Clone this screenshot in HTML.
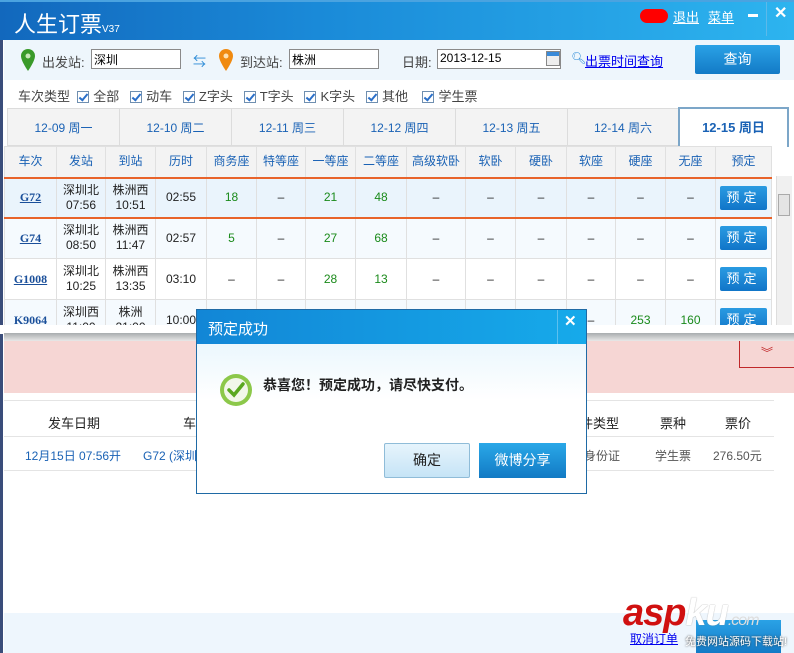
<!DOCTYPE html>
<html><head><meta charset="utf-8"><style>
*{margin:0;padding:0;box-sizing:border-box}
body{width:794px;height:653px;position:relative;overflow:hidden;background:#fff;font-family:"Liberation Sans","Noto Sans CJK SC",sans-serif;font-size:12px;color:#222}
.a{position:absolute}
.title{left:0;top:0;width:794px;height:40px;background:linear-gradient(90deg,#1268bd 0%,#1a8ad8 40%,#2db4ef 100%);border-top:2px solid #4aa3e0}
.inp{background:#fff;border:1px solid #8a8a8a;height:20px;font-size:12px;padding:1px 2px;color:#000}
.cb{display:inline-block;width:12px;height:12px;border:1px solid #6f8fb0;background:#fff;vertical-align:-2px;margin-right:4px;position:relative}
.cb:after{content:"";position:absolute;left:3px;top:0px;width:3px;height:7px;border:solid #2a6fc9;border-width:0 2px 2px 0;transform:rotate(40deg)}
.tab{top:108px;height:38px;border:1px solid #dcdcdc;background:#f3f3f3;color:#1a62b5;font-size:12px;text-align:center;line-height:38px}
table{border-collapse:collapse;position:absolute;left:4px;top:146px;table-layout:fixed}
td{border:1px solid #e0e0e0;text-align:center;font-size:12px;line-height:15px}
.h td{height:31px;background:#f3f3f3;color:#1a62b5}
.g{color:#1a8a1a}
.tn{color:#1a4f9a;font-weight:bold;text-decoration:underline;font-family:"Liberation Serif","Noto Serif CJK SC",serif}
.bk{display:inline-block;width:47px;height:24px;background:linear-gradient(#2a9be2,#1175c8);color:#fff;border-radius:2px;line-height:24px;letter-spacing:4px;font-size:13px}
</style></head><body>
<div class="a" style="left:0;top:0;width:3px;height:653px;background:#3a4d7a"></div>
<div class="a title"></div>
<div class="a" style="left:14px;top:7px;color:#fff;font-size:22px">人生订票<span style="font-size:10px">V37</span></div>
<div class="a" style="left:640px;top:9px;width:28px;height:14px;background:#f00;border-radius:7px"></div>
<div class="a" style="left:673px;top:7px;color:#fff;font-size:13px;text-decoration:underline">退出</div>
<div class="a" style="left:708px;top:7px;color:#fff;font-size:13px;text-decoration:underline">菜单</div>
<div class="a" style="left:748px;top:14px;width:10px;height:3px;background:#fff"></div>
<div class="a" style="left:766px;top:2px;width:1px;height:34px;background:#5cb9ea"></div>
<div class="a" style="left:774px;top:3px;color:#fff;font-size:16px;font-weight:bold">✕</div>
<div class="a" style="left:4px;top:40px;width:790px;height:40px;background:#eef6fc"></div>
<svg class="a" style="left:21px;top:49px" width="14" height="22"><path d="M7 0a7 7 0 0 1 7 7c0 5-7 15-7 15S0 12 0 7a7 7 0 0 1 7-7z" fill="#3a9a2a"/><circle cx="7" cy="7" r="2.5" fill="#c8e8b8"/></svg>
<div class="a" style="left:42px;top:52px;color:#444;font-size:13px">出发站:</div>
<div class="a inp" style="left:91px;top:49px;width:90px">深圳</div>
<div class="a" style="left:193px;top:51px;color:#2a8ad6;font-size:13px">⇆</div>
<svg class="a" style="left:219px;top:49px" width="14" height="22"><path d="M7 0a7 7 0 0 1 7 7c0 5-7 15-7 15S0 12 0 7a7 7 0 0 1 7-7z" fill="#f08a10"/><circle cx="7" cy="7" r="2.5" fill="#fde0b0"/></svg>
<div class="a" style="left:240px;top:52px;color:#444;font-size:13px">到达站:</div>
<div class="a inp" style="left:289px;top:49px;width:90px">株洲</div>
<div class="a" style="left:402px;top:52px;color:#444;font-size:13px">日期:</div>
<div class="a inp" style="left:437px;top:49px;width:124px">2013-12-15</div>
<div class="a" style="left:546px;top:51px;width:14px;height:15px;border:1px solid #888;background:linear-gradient(#3a8ad8 30%,#eee 30%)"></div>
<div class="a" style="left:571px;top:51px;color:#2a8ad6;font-size:12px">🔍︎</div>
<div class="a" style="left:585px;top:51px;color:#0000ee;font-size:13px;text-decoration:underline">出票时间查询</div>
<div class="a" style="left:695px;top:45px;width:85px;height:29px;background:linear-gradient(#2aa2e6,#137ac6);color:#fff;font-size:14px;text-align:center;line-height:29px;border-radius:2px">查询</div>
<div class="a" style="left:18px;top:86px;color:#444;font-size:13px;word-spacing:0">车次类型 &nbsp;<span class="cb"></span>全部 &nbsp;&nbsp;<span class="cb"></span>动车 &nbsp;&nbsp;<span class="cb"></span>Z字头 &nbsp;&nbsp;<span class="cb"></span>T字头 &nbsp;&nbsp;<span class="cb"></span>K字头 &nbsp;&nbsp;<span class="cb"></span>其他 &nbsp;&nbsp;&nbsp;<span class="cb"></span>学生票</div>
<div class="a tab" style="left:7px;width:113px">12-09 周一</div>
<div class="a tab" style="left:119px;width:113px">12-10 周二</div>
<div class="a tab" style="left:231px;width:113px">12-11 周三</div>
<div class="a tab" style="left:343px;width:113px">12-12 周四</div>
<div class="a tab" style="left:455px;width:113px">12-13 周五</div>
<div class="a tab" style="left:567px;width:112px">12-14 周六</div>
<div class="a tab" style="left:678px;width:111px;top:107px;height:40px;background:#fff;border:2px solid #7ca6c8;border-bottom:none;font-weight:bold;font-size:13px">12-15 周日</div>
<table>
<colgroup><col style="width:52px"><col style="width:49px"><col style="width:50px"><col style="width:51px"><col style="width:50px"><col style="width:49px"><col style="width:50px"><col style="width:51px"><col style="width:59px"><col style="width:50px"><col style="width:51px"><col style="width:49px"><col style="width:50px"><col style="width:50px"><col style="width:56px"></colgroup>
<tr class="h"><td>车次</td><td>发站</td><td>到站</td><td>历时</td><td>商务座</td><td>特等座</td><td>一等座</td><td>二等座</td><td>高级软卧</td><td>软卧</td><td>硬卧</td><td>软座</td><td>硬座</td><td>无座</td><td>预定</td></tr>
<tr style="height:40px;background:#eaf4fc;border-top:2px solid #e8632a;border-bottom:2px solid #e8632a"><td class="tn">G72</td><td>深圳北<br>07:56</td><td>株洲西<br>10:51</td><td>02:55</td><td class="g">18</td><td>–</td><td class="g">21</td><td class="g">48</td><td>–</td><td>–</td><td>–</td><td>–</td><td>–</td><td>–</td><td><span class="bk">预定</span></td></tr>
<tr style="height:41px;background:#f5fafe"><td class="tn">G74</td><td>深圳北<br>08:50</td><td>株洲西<br>11:47</td><td>02:57</td><td class="g">5</td><td>–</td><td class="g">27</td><td class="g">68</td><td>–</td><td>–</td><td>–</td><td>–</td><td>–</td><td>–</td><td><span class="bk">预定</span></td></tr>
<tr style="height:41px"><td class="tn">G1008</td><td>深圳北<br>10:25</td><td>株洲西<br>13:35</td><td>03:10</td><td>–</td><td>–</td><td class="g">28</td><td class="g">13</td><td>–</td><td>–</td><td>–</td><td>–</td><td>–</td><td>–</td><td><span class="bk">预定</span></td></tr>
<tr style="height:41px;background:#f5fafe"><td class="tn">K9064</td><td>深圳西<br>11:00</td><td>株洲<br>21:00</td><td>10:00</td><td></td><td></td><td></td><td></td><td></td><td></td><td></td><td>–</td><td class="g">253</td><td class="g">160</td><td><span class="bk">预定</span></td></tr>
</table>
<div class="a" style="left:776px;top:176px;width:16px;height:150px;background:#f0f0f0;border-left:1px solid #ddd"></div>
<div class="a" style="left:778px;top:194px;width:12px;height:22px;background:#e4e4e4;border:1px solid #aaa"></div>
<div class="a" style="left:0;top:325px;width:794px;height:9px;background:#fff"></div>
<div class="a" style="left:4px;top:333px;width:790px;height:8px;background:linear-gradient(#a8acae,#e8e8e8)"></div>
<div class="a" style="left:4px;top:341px;width:790px;height:52px;background:#f6d6d4"></div>
<div class="a" style="left:739px;top:341px;width:55px;height:27px;border-left:1px solid #c0282a;border-bottom:1px solid #c0282a;color:#c0282a;text-align:center;font-size:12px;line-height:24px">︾</div>
<div class="a" style="left:4px;top:400px;width:770px;height:1px;background:#e4e4e4"></div>
<div class="a" style="left:48px;top:413px;font-size:13px;color:#222">发车日期</div>
<div class="a" style="left:183px;top:413px;font-size:13px;color:#222">车</div>
<div class="a" style="left:580px;top:413px;font-size:13px;color:#222">件类型</div>
<div class="a" style="left:660px;top:413px;font-size:13px;color:#222">票种</div>
<div class="a" style="left:725px;top:413px;font-size:13px;color:#222">票价</div>
<div class="a" style="left:4px;top:436px;width:770px;height:1px;background:#e4e4e4"></div>
<div class="a" style="left:25px;top:447px;font-size:12px;color:#1a62b5">12月15日 07:56开</div>
<div class="a" style="left:143px;top:447px;font-size:12px;color:#1a62b5">G72 (深圳北</div>
<div class="a" style="left:584px;top:447px;font-size:12px;color:#555">身份证</div>
<div class="a" style="left:655px;top:447px;font-size:12px;color:#555">学生票</div>
<div class="a" style="left:713px;top:447px;font-size:12px;color:#555">276.50元</div>
<div class="a" style="left:4px;top:470px;width:770px;height:1px;background:#e4e4e4"></div>
<div class="a" style="left:4px;top:613px;width:790px;height:40px;background:#eef6fd"></div>
<div class="a" style="left:630px;top:630px;font-size:12px;color:#0000ee;text-decoration:underline">取消订单</div>
<div class="a" style="left:696px;top:620px;width:85px;height:33px;background:linear-gradient(#2aa2e6,#137ac6)"></div>
<div class="a" style="left:623px;top:592px;font-size:38px;font-weight:bold;font-style:italic;color:#d01010;letter-spacing:-1px">asp<span style="color:#fff;text-shadow:0 0 1px #888">ku</span><span style="font-size:16px;color:#ddd;font-weight:normal">.com</span></div>
<div class="a" style="left:685px;top:633px;font-size:11px;color:#fff;text-shadow:0 0 2px #333">免费网站源码下载站!</div>
<div class="a" style="left:196px;top:309px;width:391px;height:185px;border:1px solid #1f6aa5;background:linear-gradient(#dff2fc 0,#fff 90px,#fff)"></div>
<div class="a" style="left:197px;top:310px;width:389px;height:34px;background:linear-gradient(90deg,#1286d6,#16aaea)"></div>
<div class="a" style="left:208px;top:318px;color:#fff;font-size:15px">预定成功</div>
<div class="a" style="left:557px;top:310px;width:1px;height:34px;background:#5cc0ef"></div>
<div class="a" style="left:564px;top:312px;color:#fff;font-size:15px;font-weight:bold">✕</div>
<svg class="a" style="left:219px;top:373px" width="34" height="34"><circle cx="17" cy="17" r="16" fill="#8cc84a"/><circle cx="17" cy="17" r="12" fill="#f2f7ea"/><path d="M10 17l5 5 9-11" stroke="#5aa820" stroke-width="3.5" fill="none" stroke-linecap="round"/></svg>
<div class="a" style="left:263px;top:375px;font-size:14px;font-weight:bold;color:#222">恭喜您！预定成功，请尽快支付。</div>
<div class="a" style="left:384px;top:443px;width:86px;height:35px;border:1px solid #8fbcd8;background:linear-gradient(#e6f4fc,#c6e4f6);border-radius:2px;font-size:14px;text-align:center;line-height:33px">确定</div>
<div class="a" style="left:479px;top:443px;width:87px;height:35px;background:linear-gradient(#2aa8e8,#127ac4);color:#fff;font-size:14px;text-align:center;line-height:35px">微博分享</div>
</body></html>
